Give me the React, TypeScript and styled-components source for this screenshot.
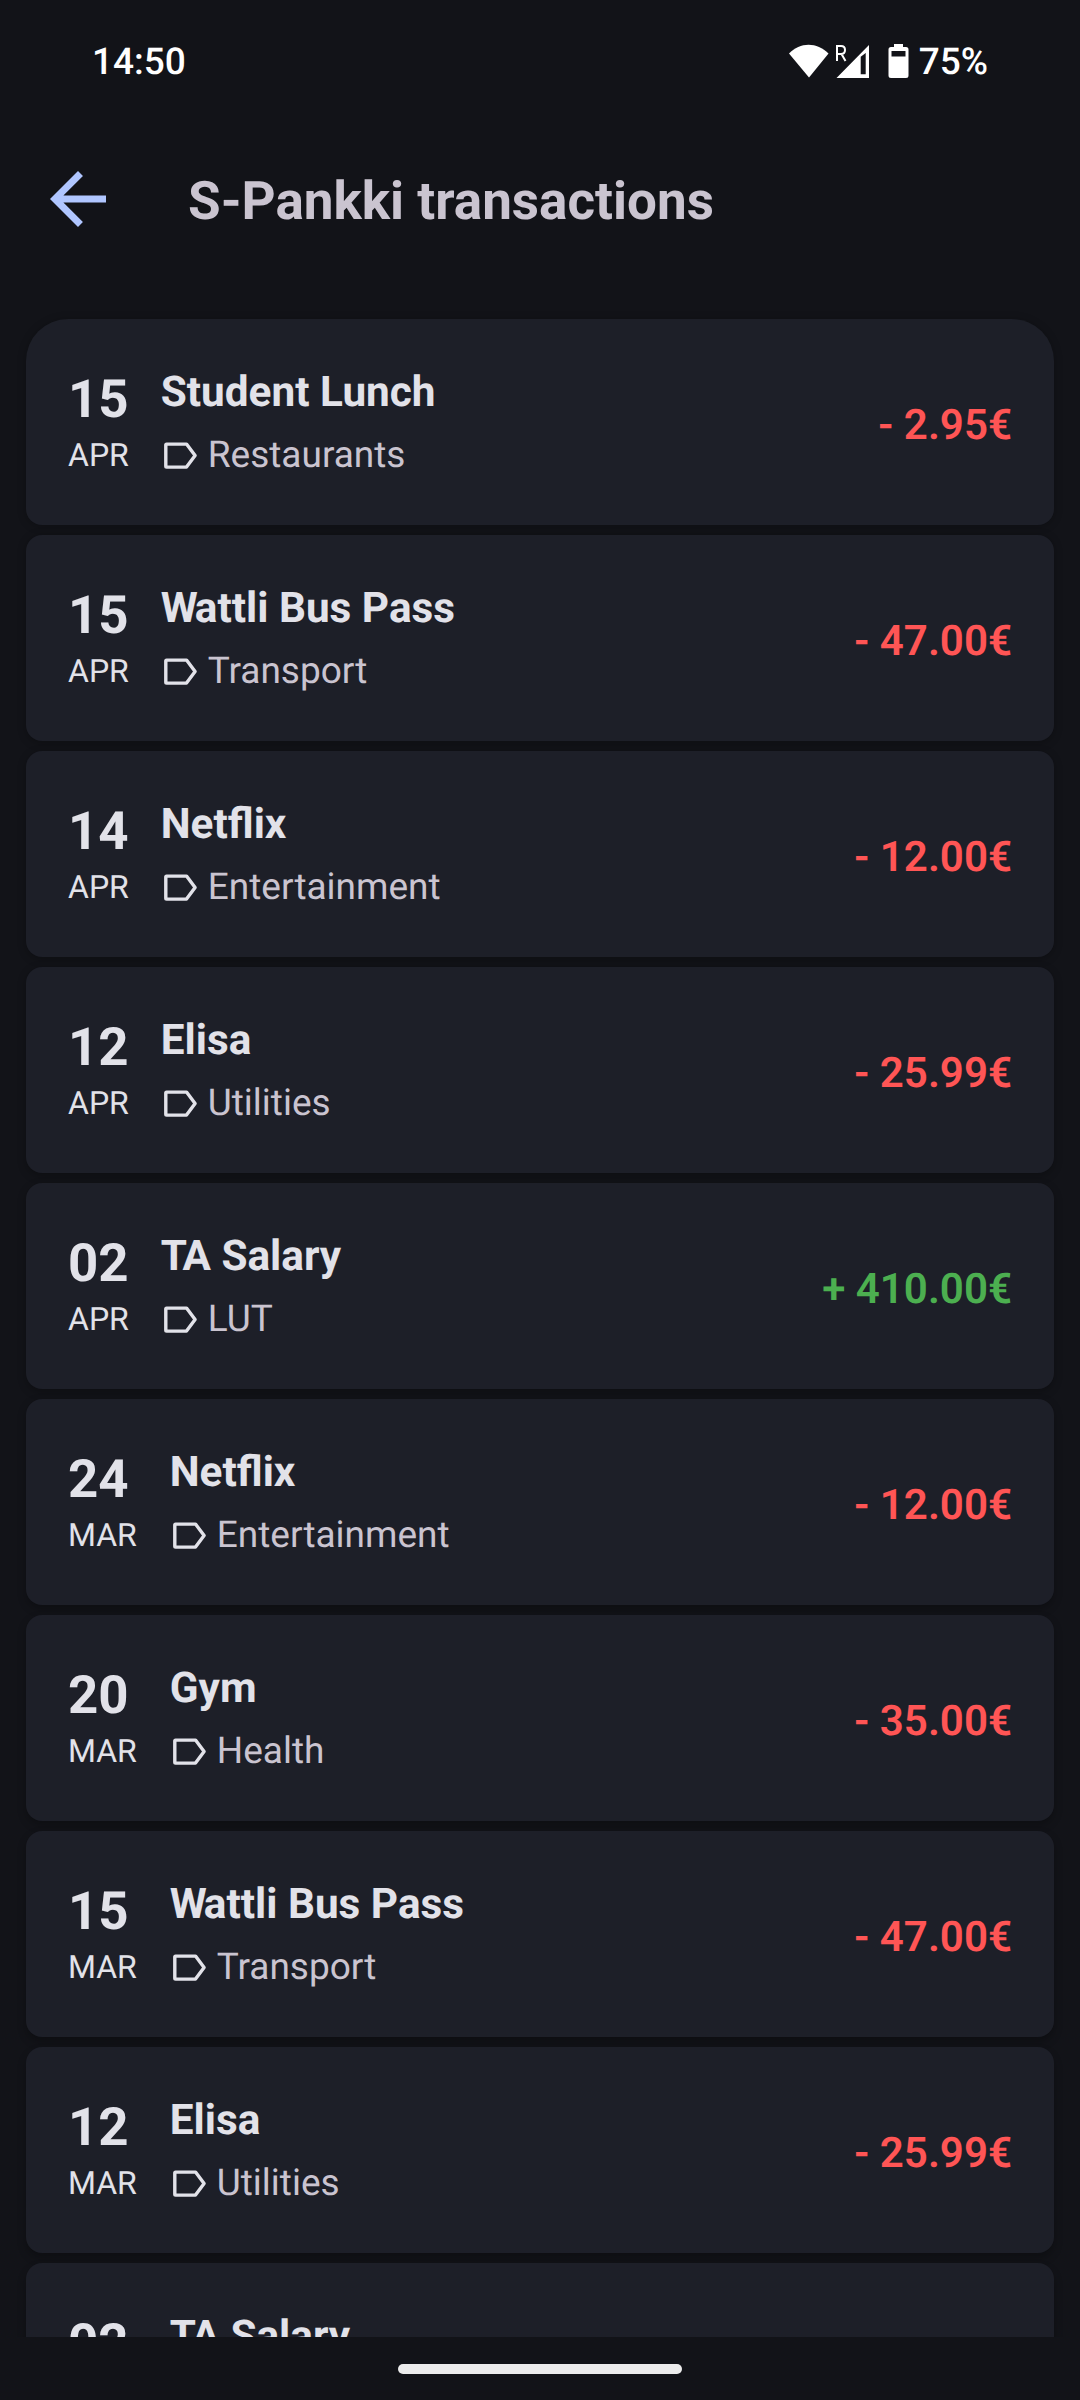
import React from "react";
import styled, { createGlobalStyle } from "styled-components";

const GlobalStyle = createGlobalStyle`
  html, body { margin: 0; background: #121318; }
  body { font-family: Roboto, "Noto Sans", sans-serif; color: #e2e2e9; text-rendering: geometricPrecision; }
`;

const Screen = styled.main`
  width: 1080px;
  height: 2400px;
  display: flex;
  flex-direction: column;
  overflow: hidden;
  background: #121318;
`;

const StatusBar = styled.div`
  flex: none;
  height: 120px;
  box-sizing: border-box;
  padding: 4px 92px 0 92px;
  display: flex;
  align-items: center;
  justify-content: space-between;
  color: #fff;
  font-size: 37px;
  font-weight: 500;
`;

const StatusIcons = styled.div`
  display: flex;
  align-items: center;
`;

const StatusGlyphs = styled.svg`
  display: block;
  margin: -2px 10px 0 0;
`;

const TopBar = styled.header`
  flex: none;
  height: 160px;
  display: flex;
  align-items: center;
  padding-left: 36px;
  gap: 68px;
`;

const BackButton = styled.button`
  border: 0;
  padding: 0;
  background: none;
  display: flex;
  margin-top: -3px;
`;

const Title = styled.h1`
  margin: 2px 0 0;
  font-size: 53px;
  line-height: 74px;
  font-weight: 700;
  color: #cac4d0;
`;

const List = styled.ul`
  list-style: none;
  margin: 0;
  padding: 39px 26px 0;
  flex: 1;
  min-height: 0;
  overflow: hidden;
  display: flex;
  flex-direction: column;
  gap: 10px;
`;

const Card = styled.li<{ $first: boolean; $depth: number }>`
  flex: none;
  height: 206px;
  box-sizing: border-box;
  padding: 41px 42px 0;
  display: flex;
  align-items: flex-start;
  background: #1d1f28;
  border-radius: ${(p) => (p.$first ? "42px 42px 16px 16px" : "16px")};
  box-shadow: 0 ${(p) => p.$depth}px 8px rgba(0, 0, 0, 0.25);
`;

const DateColumn = styled.div<{ $width: number }>`
  flex: none;
  width: ${(p) => p.$width}px;
  display: flex;
  flex-direction: column;
  padding-top: 3.5px;
  margin-right: 31.5px;
`;

const Day = styled.span`
  font-size: 52.8px;
  line-height: 70px;
  font-weight: 700;
`;

const Month = styled.span`
  font-size: 32px;
  line-height: 42px;
`;

const Details = styled.div`
  flex: 1;
  display: flex;
  flex-direction: column;
  gap: 6px;
  padding-top: 1px;
`;

const Name = styled.span<{ $kern: number }>`
  font-size: 42.3px;
  line-height: 63px;
  font-weight: 700;

  &::first-letter {
    letter-spacing: ${(p) => p.$kern}px;
  }
`;

const Category = styled.span`
  display: flex;
  align-items: center;
  gap: 7px;
  font-size: 37px;
  line-height: 52px;
  color: #cac4d0;
`;

const Amount = styled.span<{ $income: boolean }>`
  align-self: center;
  margin-top: -34px;
  font-size: 42.1px;
  line-height: 63px;
  font-weight: 600;
  color: ${(p) => (p.$income ? "#4caf50" : "#ff5555")};
`;

const NavBar = styled.footer`
  flex: none;
  height: 63px;
  box-sizing: border-box;
  padding-top: 27px;
  display: flex;
  justify-content: center;
`;

const Handle = styled.div`
  width: 284px;
  height: 10px;
  border-radius: 5px;
  background: #ececec;
`;

const LabelIcon = () => (
  <svg width="40" height="42" viewBox="0 0 40 42" fill="none" stroke="#e2e2e9" strokeWidth="3.4" strokeLinejoin="round">
    <path d="M5.6 9.1h19.900l8.600 11.500-8.600 11.500H5.600q-.8 0-.8-.8V9.900q0-.8.8-.8z" />
  </svg>
);

type Transaction = { day: string; month: string; name: string; category: string; amount: string };

const monthWidths: Record<string, number> = { APR: 61.25, MAR: 70.25 };

// Tightens the wide initials T and W against the letter that follows.
const initialKern: Record<string, number> = { T: -4.5, W: -3 };

const transactions: Transaction[] = [
  { day: "15", month: "APR", name: "Student Lunch", category: "Restaurants", amount: "- 2.95€" },
  { day: "15", month: "APR", name: "Wattli Bus Pass", category: "Transport", amount: "- 47.00€" },
  { day: "14", month: "APR", name: "Netflix", category: "Entertainment", amount: "- 12.00€" },
  { day: "12", month: "APR", name: "Elisa", category: "Utilities", amount: "- 25.99€" },
  { day: "02", month: "APR", name: "TA Salary", category: "LUT", amount: "+ 410.00€" },
  { day: "24", month: "MAR", name: "Netflix", category: "Entertainment", amount: "- 12.00€" },
  { day: "20", month: "MAR", name: "Gym", category: "Health", amount: "- 35.00€" },
  { day: "15", month: "MAR", name: "Wattli Bus Pass", category: "Transport", amount: "- 47.00€" },
  { day: "12", month: "MAR", name: "Elisa", category: "Utilities", amount: "- 25.99€" },
  { day: "02", month: "MAR", name: "TA Salary", category: "LUT", amount: "+ 410.00€" },
];

export default function App() {
  return (
    <Screen>
      <GlobalStyle />
      <StatusBar>
        <span>14:50</span>
        <StatusIcons>
          <StatusGlyphs width="120" height="36" viewBox="0 0 120 36" fill="#fff">
            <path d="M0 10.5C11-1.2 28-1.2 39.5 10.5L20 34.5z" />
            <path d="M80 2v33H47.500z M71.700 13.800v17.500h5V10z" fillRule="evenodd" />
            <path d="M48 18V3h4q4 0 4 4t-4 4h-4m4.500 0 4 7" fill="none" stroke="#fff" strokeWidth="2" />
            <path d="M105 1h9v3h3q2.500 0 2.500 2.500v26q0 2.500-2.500 2.500h-15q-2.500 0-2.500-2.500v-26q0-2.500 2.500-2.500h3z M102.500 8v5.500h14V8z" fillRule="evenodd" />
          </StatusGlyphs>
          <span>75%</span>
        </StatusIcons>
      </StatusBar>
      <TopBar>
        <BackButton aria-label="Back">
          <svg width="84" height="84" viewBox="0 0 24 24" fill="#b0c6ff">
            <path d="M20 11H7.830l5.590-5.590L12 4l-8 8 8 8 1.410-1.410L7.830 13H20v-2z" />
          </svg>
        </BackButton>
        <Title>S-Pankki transactions</Title>
      </TopBar>
      <List>
        {transactions.map((t, i) => (
          <Card key={i} $first={i === 0} $depth={1 + i * 0.5}>
            <DateColumn $width={monthWidths[t.month]}>
              <Day>{t.day}</Day>
              <Month>{t.month}</Month>
            </DateColumn>
            <Details>
              <Name $kern={initialKern[t.name[0]] ?? 0}>{t.name}</Name>
              <Category>
                <LabelIcon />
                {t.category}
              </Category>
            </Details>
            <Amount $income={t.amount.startsWith("+")}>{t.amount}</Amount>
          </Card>
        ))}
      </List>
      <NavBar>
        <Handle />
      </NavBar>
    </Screen>
  );
}
